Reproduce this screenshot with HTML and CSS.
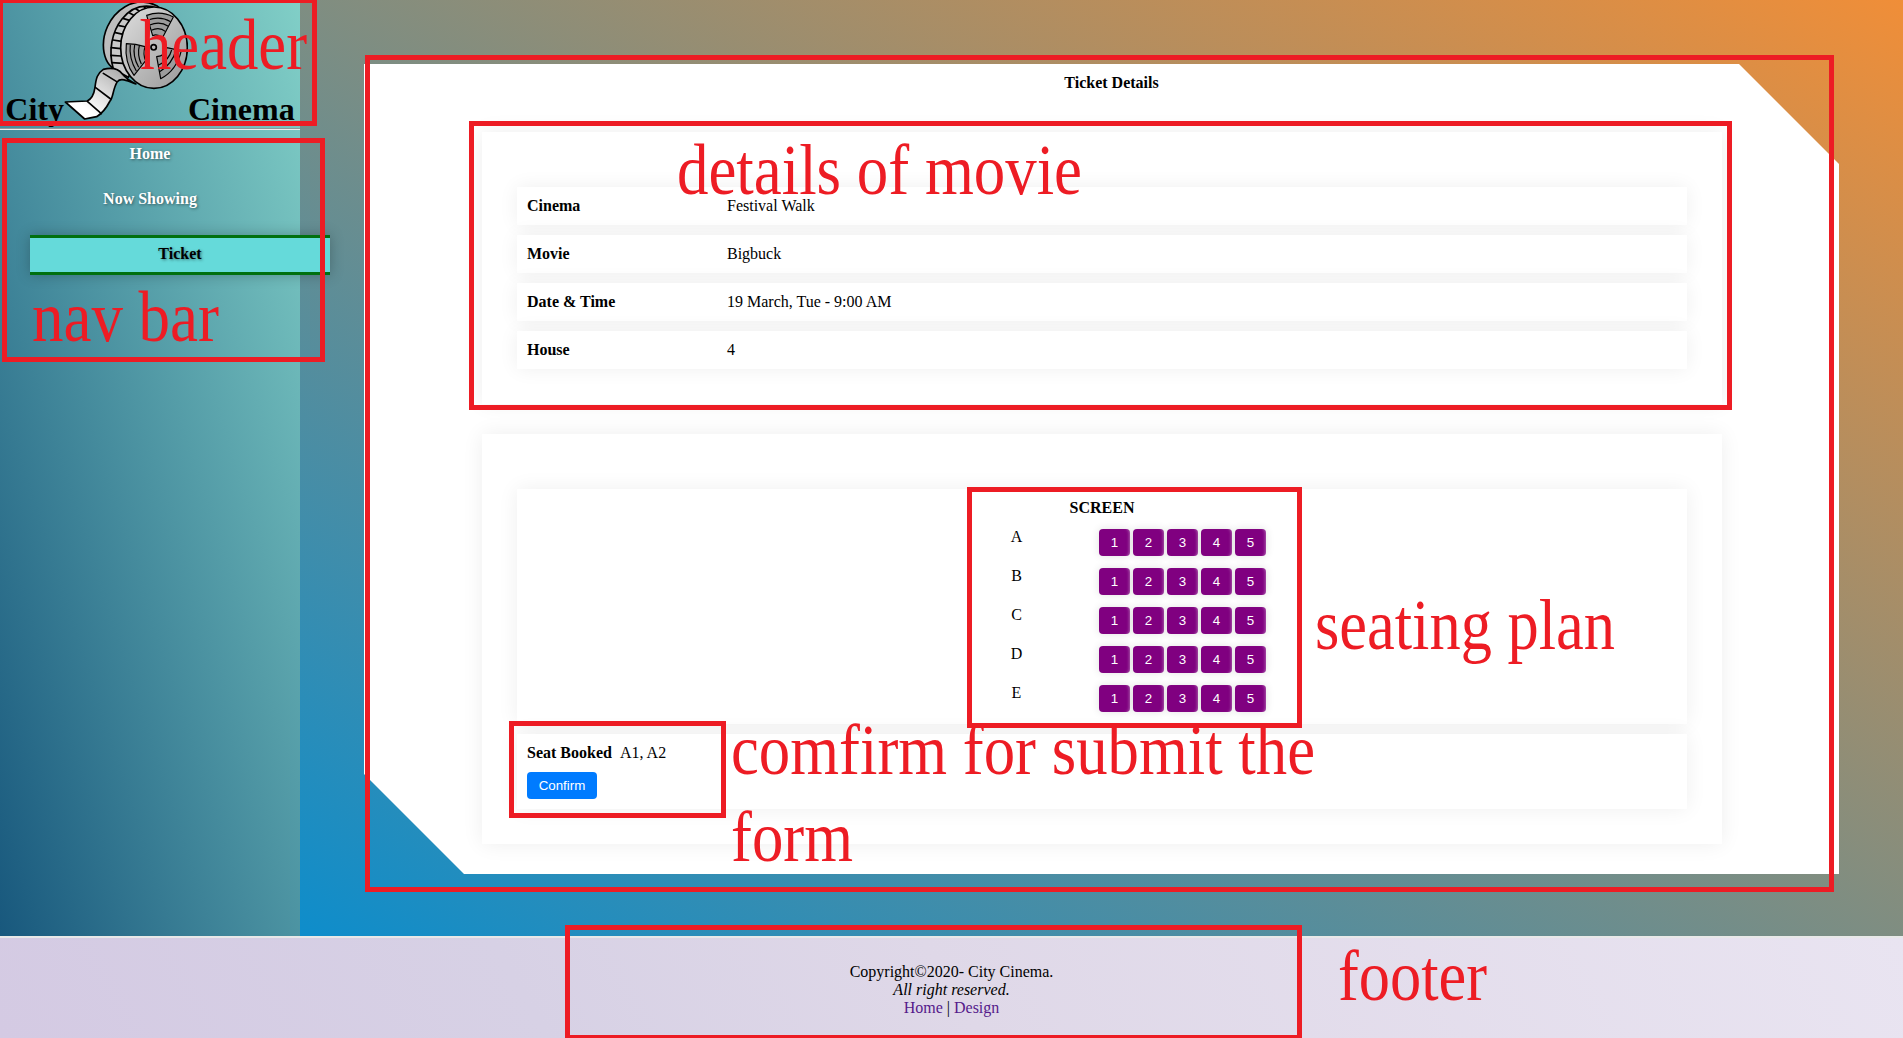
FILE: index.html
```html
<!DOCTYPE html>
<html lang="en">
<head>
<meta charset="utf-8">
<title>City Cinema - Ticket</title>
<link rel="stylesheet" href="styles.css">
</head>
<body>
<div class="layout">
  <aside class="sidebar">
    <header class="brand">
      <span>City</span><svg class="reel" viewBox="192 0 372 360" aria-hidden="true">
        <defs>
          <linearGradient id="disc" x1="0" y1="0" x2="1" y2="1"><stop offset="0" stop-color="#dedede"/><stop offset="1" stop-color="#989898"/></linearGradient>
          <linearGradient id="film" x1="1" y1="0" x2="0" y2="1"><stop offset="0" stop-color="#999"/><stop offset=".4" stop-color="#d4d4d4"/><stop offset=".75" stop-color="#fff"/></linearGradient>
        </defs>
        <g stroke="#000" stroke-width="5" stroke-linejoin="round" stroke-linecap="round">
          <path d="M470 17C440 2 405 3 375 20C328 48 303 105 312 157C318 188 332 205 362 216L400 220L500 40Z" fill="#bdbdbd"/>
          <path d="M458 20C425 14 392 24 366 57C336 95 324 152 340 207L385 232L480 30Z" fill="#c9c9c9"/>
          <path d="M432 20L440 29M408 27L423 36M389 39L405 48M371 56L391 62M357 77L378 81M346 98L370 103M339 120L365 124M334 143L362 146M333 166L363 168M336 188L369 190" fill="none"/>
          <path d="M310 208C335 202 356 207 367 222C380 238 392 244 408 252C385 243 362 232 352 245C338 268 340 292 330 303C318 326 302 343 290 350Q270 354 254 357L196 306L262 303C276 296 282 283 285 262C288 235 292 220 310 208Z" fill="url(#film)"/>
          <path d="M310 220L350 245M286 262L332 297M262 304L304 341" fill="none"/>
          <ellipse cx="462" cy="143" rx="100" ry="122" fill="url(#disc)"/>
        </g>
        <g stroke="#000" stroke-width="3.5" fill="#9c9c9c" stroke-linejoin="round">
          <path d="M440 46Q482 31 520 51L487 114Q472 100 458 107Z"/>
          <path d="M379 131Q407 131 435 140Q428 164 437 182L402 226Q373 188 379 131Z"/>
          <path d="M500 143Q521 147 544 152Q529 213 482 236L470 170Q496 168 500 143Z"/>
          <path fill="none" d="M444 60Q480 47 512 65M449 75Q480 62 505 79M454 91Q478 79 497 95M391 134Q386 174 409 213M404 135Q397 168 416 202M418 137Q411 165 424 192M528 150Q517 192 478 216M515 150Q507 181 475 196"/>
          <circle cx="461" cy="142" r="8" stroke-width="5" fill="#bbb"/>
        </g>
      </svg><span>Cinema</span>
    </header>
    <hr class="divider">
    <nav class="nav">
      <a class="nav-item">Home</a>
      <a class="nav-item">Now Showing</a>
      <a class="nav-item active">Ticket</a>
    </nav>
  </aside>

  <main class="main">
    <section class="panel">
      <h1 class="title">Ticket Details</h1>
      <div class="card">
        <div class="row"><b class="label">Cinema</b><span>Festival Walk</span></div>
        <div class="row"><b class="label">Movie</b><span>Bigbuck</span></div>
        <div class="row"><b class="label">Date &amp; Time</b><span>19 March, Tue - 9:00 AM</span></div>
        <div class="row"><b class="label">House</b><span>4</span></div>
      </div>
      <div class="card">
        <div class="row plan">
          <b>SCREEN</b>
          <div class="seats">
            <div class="seat-row"><span class="letter">A</span><div class="seat-set"><button class="seat">1</button><button class="seat">2</button><button class="seat">3</button><button class="seat">4</button><button class="seat">5</button></div></div>
            <div class="seat-row"><span class="letter">B</span><div class="seat-set"><button class="seat">1</button><button class="seat">2</button><button class="seat">3</button><button class="seat">4</button><button class="seat">5</button></div></div>
            <div class="seat-row"><span class="letter">C</span><div class="seat-set"><button class="seat">1</button><button class="seat">2</button><button class="seat">3</button><button class="seat">4</button><button class="seat">5</button></div></div>
            <div class="seat-row"><span class="letter">D</span><div class="seat-set"><button class="seat">1</button><button class="seat">2</button><button class="seat">3</button><button class="seat">4</button><button class="seat">5</button></div></div>
            <div class="seat-row"><span class="letter">E</span><div class="seat-set"><button class="seat">1</button><button class="seat">2</button><button class="seat">3</button><button class="seat">4</button><button class="seat">5</button></div></div>
          </div>
        </div>
        <div class="row booking">
          <div class="booked"><b>Seat Booked</b><span>A1, A2</span></div>
          <button class="confirm">Confirm</button>
        </div>
      </div>
    </section>
  </main>
</div>

<footer class="footer">
  <div>Copyright©2020- City Cinema.</div>
  <div><i>All right reserved.</i></div>
  <div><a class="link">Home</a> | <a class="link">Design</a></div>
</footer>

<svg class="notes" width="1903" height="1038" viewBox="0 0 1903 1038">
  <g class="note-text">
    <text x="731" y="774" textLength="584" lengthAdjust="spacingAndGlyphs">comfirm for submit the</text>
    <text x="731" y="861" textLength="122" lengthAdjust="spacingAndGlyphs">form</text>
  </g>
  <g class="note-box">
    <rect x="0.5" y="0.5" width="314" height="123"/>
    <rect x="4.5" y="140.5" width="318" height="219"/>
    <rect x="367.5" y="57.5" width="1464" height="832"/>
    <rect x="471.5" y="123.5" width="1258" height="284"/>
    <rect x="969.5" y="489.5" width="330" height="236"/>
    <rect x="511.5" y="723.5" width="212" height="92"/>
    <rect x="567.5" y="927.5" width="732" height="110"/>
  </g>
  <g class="note-text">
    <text x="140" y="69" textLength="167" lengthAdjust="spacingAndGlyphs">header</text>
    <text x="32" y="341" textLength="187" lengthAdjust="spacingAndGlyphs">nav bar</text>
    <text x="677" y="194" textLength="405" lengthAdjust="spacingAndGlyphs">details of movie</text>
    <text x="1315" y="649" textLength="300" lengthAdjust="spacingAndGlyphs">seating plan</text>
    <text x="1338" y="1000" textLength="149" lengthAdjust="spacingAndGlyphs">footer</text>
  </g>
</svg>
</body>
</html>
```
FILE: styles.css
```css
* { box-sizing: border-box; }

body {
  margin: 0;
  height: 1038px;
  overflow: hidden;
  position: relative;
  display: flex;
  flex-direction: column;
  font: 16px/18px "Liberation Serif", "Times New Roman", serif;
  color: #000;
}

.layout {
  display: flex;
  height: 936px;
}

.sidebar {
  width: 300px;
  flex: none;
  background: linear-gradient(to top right, #18587d, #81cfc7);
}

.brand {
  display: flex;
  justify-content: center;
  align-items: flex-end;
  height: 128px;
  font-size: 32px;
  line-height: 37px;
  font-weight: bold;
}

.reel {
  width: 124px;
  height: 120px;
  margin-bottom: 8px;
}

.divider {
  margin: 0;
  border: 0;
  border-top: 1px solid #8f9a9a;
  border-bottom: 1px solid #eee;
}

.nav {
  display: flex;
  flex-direction: column;
  padding-top: 5px;
  gap: 7px;
}

.nav-item {
  padding: 10px 0;
  text-align: center;
  font-weight: bold;
  color: #fff;
  text-shadow: 1px 1px 3px rgba(0, 0, 0, .45);
}

.nav-item.active {
  width: 300px;
  height: 40px;
  margin: 10px 0 0 30px;
  padding: 7px 0 9px;
  color: #000;
  background: #65dada;
  border: solid #00700f;
  border-width: 3px 0;
  box-shadow: 0 0 14px rgba(0, 0, 0, .25);
  z-index: 1;
}

.main {
  flex: 1;
  padding: 64px 64px 62px;
  background: linear-gradient(to top right, #0e8dcb, #f08e38);
}

.panel {
  height: 810px;
  padding-top: 10px;
  background: #fff;
  clip-path: polygon(0 0, calc(100% - 100px) 0, 100% 100px, 100% 100%, 100px 100%, 0 calc(100% - 100px));
}

.title {
  margin: 0 0 40px;
  padding-left: 20px;
  font-size: 16px;
  line-height: 18px;
  text-align: center;
}

.card {
  display: flex;
  flex-direction: column;
  gap: 10px;
  width: 1240px;
  margin: 0 0 30px 118px;
  padding: 55px 35px 35px;
  box-shadow: 0 0 20px rgba(0, 0, 0, .07);
}

.row {
  display: flex;
  padding: 10px;
  background: #fff;
  box-shadow: 0 0 20px rgba(0, 0, 0, .065);
}

.label { width: 200px; }

.plan {
  flex-direction: column;
  align-items: center;
}

.seats {
  width: 336px;
  padding-top: 2px;
}

.seat-row {
  display: grid;
  grid-template-columns: 165px 171px;
  height: 39px;
  padding-top: 9px;
}

.letter { text-align: center; }

.seat-set {
  display: flex;
  gap: 3px;
  padding-top: 1px;
}

.seat,
.confirm {
  height: 27px;
  padding: 0;
  border: 0;
  border-radius: 4px;
  color: #fff;
  font: 13.333px "Liberation Sans", Arial, sans-serif;
}

.seat {
  width: 31px;
  background: #800080;
  box-shadow: 0 0 8px rgba(0, 0, 0, .12), inset -3px 0 3px -2px rgba(255, 255, 255, .35);
}

.booking {
  flex-direction: column;
  gap: 10px;
}

.booked {
  display: flex;
  gap: 8px;
}

.confirm {
  width: 70px;
  background: #007bff;
}

.footer {
  height: 102px;
  padding-top: 25px;
  text-align: center;
  border-top: 2px solid #e8e8e8;
  background: linear-gradient(60deg, #d4cae3, #d7d1e5 28%, #dfd8e8 50%, #e9e4f1);
}

.link { color: #551a8b; }

/* Free-standing labels drawn over the page */
.notes {
  position: absolute;
  left: 0;
  top: 0;
  z-index: 2;
  pointer-events: none;
}

.note-box {
  fill: none;
  stroke: #ed1c24;
  stroke-width: 5px;
}

.note-text {
  fill: #ed1c24;
  font-size: 71px;
}
```
